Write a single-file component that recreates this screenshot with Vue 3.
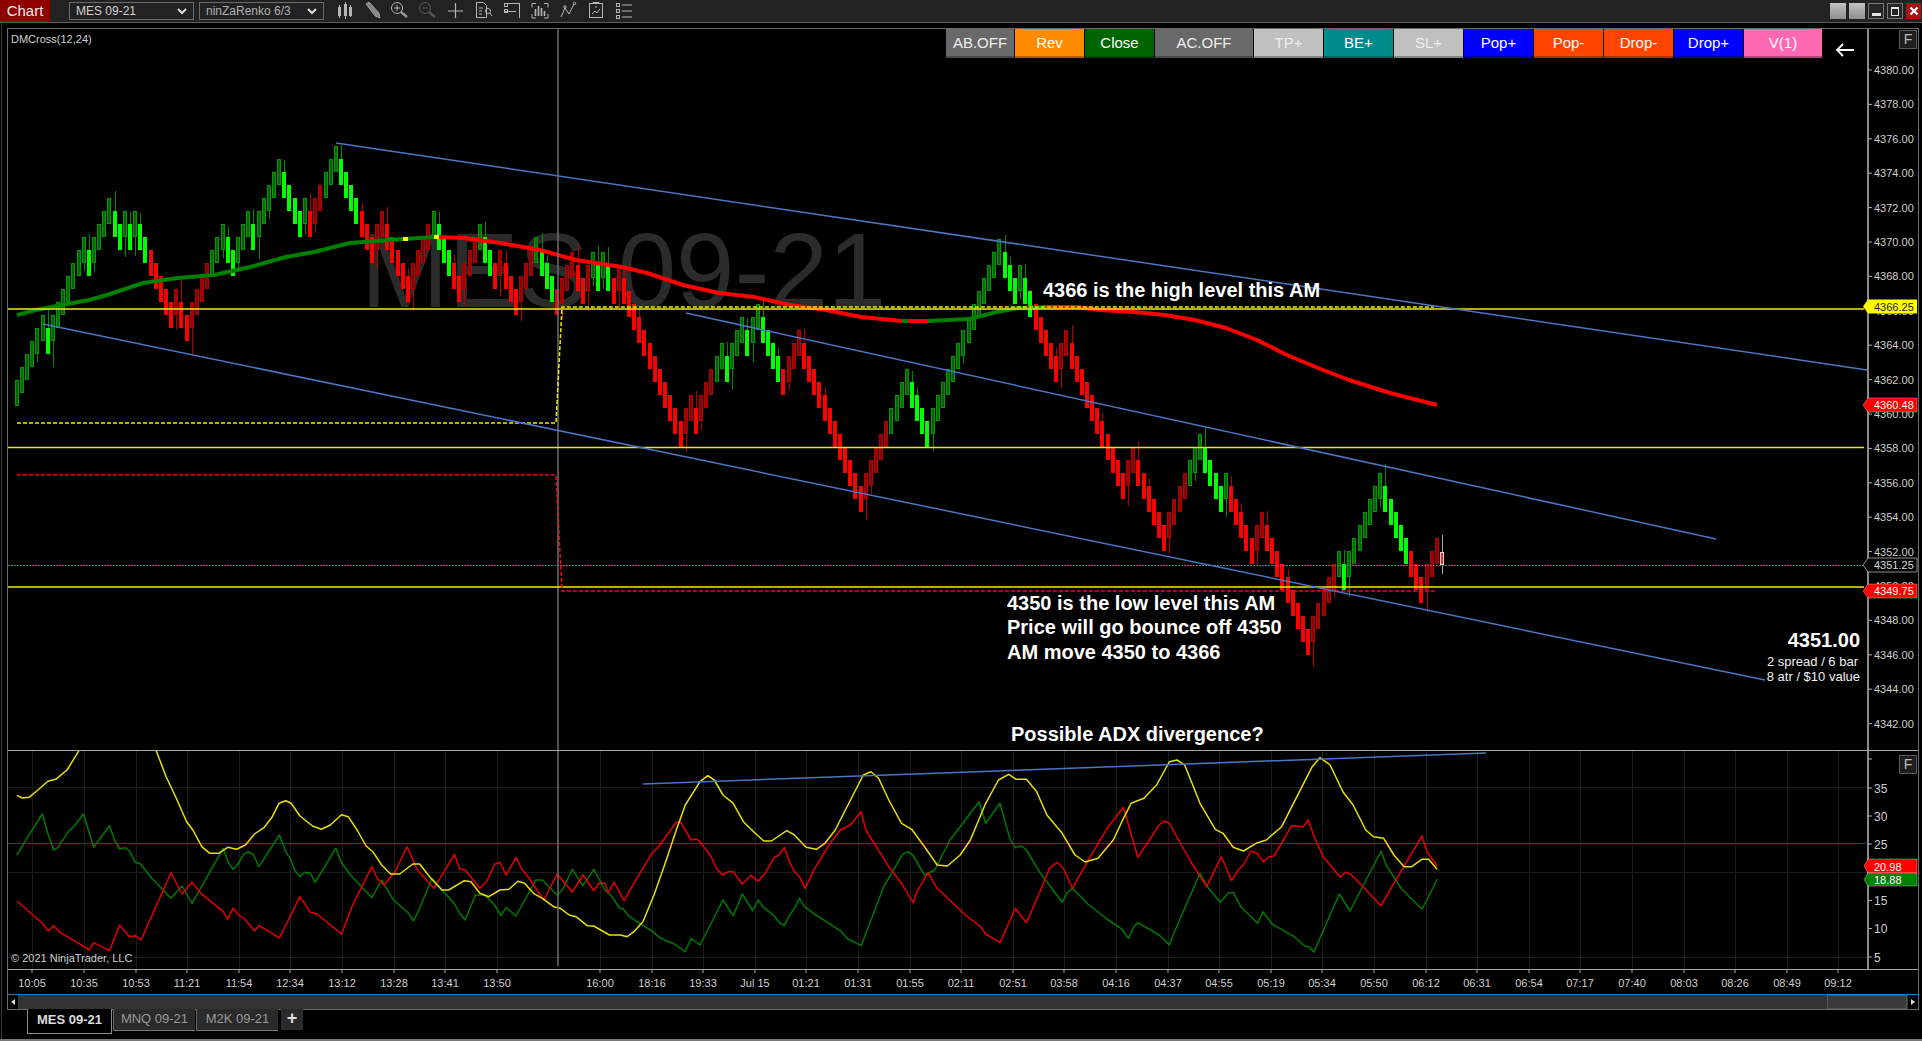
<script setup>
// all chart coordinates below are page pixels, the svg viewBoxes are offset to match
const BAR_STEP = 5.145
const BRICK = 13

const moves = 'U5 D1 U7 D1 U4 D2 U1 D1 U1 D1 D6 U1 D2 U7 D2 U3 D1 U5 D4 U1 D1 U5 D7 U2 D5 U5 D5 U4 D3 U1 D3 U4 D4 ' +
  'U3 D2 U2 D1 U1 D2 U1 D2 D10 U2 D1 U5 D1 U3 D1 U2 D5 U3 D12 U9 D4 U14 D3 U1 D7 U2 D6 ' +
  'D5 U2 D6 U7 D4 U1 D5 U2 D9 U6 D1 U7 D8 U3'

const greenRanges = [[0, 25], [38, 56], [60, 66], [81, 84], [90, 92], [101, 104], [112, 115], [136, 148], [170, 197], [228, 235], [257, 270]]

// the long wicks at the swing lows and highs
const wickOverride = { 7: 26, 19: 20, 34: 26, 165: 21, 178: 17, 196: 14, 252: 25, 259: 20, 224: 16, 266: 22, 274: 22 }

function isGreen(i) {
  return greenRanges.some(([a, b]) => i >= a && i <= b)
}

function buildBars() {
  const list = []
  let y = 393
  let prev = 'U'
  let i = 0
  const push = (dir) => {
    const up = dir === 'U'
    const green = isGreen(i)
    const turned = dir !== prev
    const len = wickOverride[i] || (turned ? 8 + ((i * 7) % 15) : (i % 9 === 4 ? 8 : 0))
    list.push({
      x: Math.round(16.8 + i * BAR_STEP) - 2,
      y: Math.round(y - 13),
      cls: (green ? 'g' : 'r') + (up ? ' rise' : ' fall'),
      wick: len
        ? up
          ? { y1: Math.round(y + 13), y2: Math.round(y + 13 + len) }
          : { y1: Math.round(y - 13 - len), y2: Math.round(y - 13) }
        : null,
    })
    prev = dir
    i++
  }
  push('U')
  moves.split(' ').forEach((m) => {
    const dir = m[0]
    const n = Number(m.slice(1))
    for (let k = 0; k < n; k++) {
      y += dir === 'U' ? -BRICK : BRICK
      if (i === 106) y += 2
      push(dir)
    }
  })
  return list
}

const bars = buildBars()
const lastBarX = Math.round(16.8 + bars.length * BAR_STEP) - 2

const toPoints = (pts) => pts.map(([x, y]) => `${x},${y}`).join(' ')

const maGreenA = [[17, 315], [36, 310], [57, 306], [89, 300], [107, 295], [143, 283], [178, 278], [214, 275], [250, 267], [286, 257], [314, 252], [350, 243], [403, 239], [436, 237]]
const maRedA = [[436, 237], [464, 238], [500, 243], [540, 250], [576, 260], [622, 267], [647, 273], [683, 285], [719, 293], [754, 297], [790, 305], [826, 310], [861, 317], [902, 321]]
const maGreenB = [[902, 321], [908, 321]]
const maRedB = [[908, 321], [928, 321]]
const maGreenC = [[928, 321], [969, 319], [997, 312], [1018, 308], [1045, 307]]
const maRedC = [[1045, 307], [1076, 307], [1100, 310], [1135, 312], [1165, 315], [1195, 320], [1226, 328], [1257, 340], [1287, 355], [1318, 368], [1349, 380], [1390, 393], [1437, 405]]

// indicator lines, read from two crops of the reference
const fromLeft = (pts) => pts.map(([x, y]) => [+(x / 2.24).toFixed(1), +(740 + y / 3).toFixed(1)])
const fromRight = (pts) => pts.map(([x, y]) => [+(700 + x / 1.96).toFixed(1), +(740 + y / 3).toFixed(1)])

const adx = [...fromLeft([[38, 166], [50, 174], [65, 172], [85, 150], [107, 124], [125, 118], [150, 90], [177, 32], [260, -120], [350, 32], [372, 110], [395, 175], [418, 245], [432, 270], [452, 320], [470, 340], [490, 340], [510, 322], [530, 328], [550, 315], [570, 282], [592, 262], [610, 230], [625, 190], [640, 182], [652, 190], [672, 228], [700, 258], [720, 268], [740, 255], [765, 224], [780, 230], [800, 270], [820, 318], [835, 335], [855, 375], [875, 402], [895, 402], [925, 372], [940, 372], [965, 415], [990, 450], [1005, 450], [1040, 422], [1055, 425], [1075, 460], [1095, 470], [1120, 450], [1140, 448], [1160, 424], [1175, 430], [1195, 460], [1215, 475], [1240, 500], [1255, 505], [1275, 525], [1290, 530], [1315, 557], [1330, 558], [1365, 585], [1390, 585], [1405, 590], [1420, 575], [1440, 545], [1465, 465], [1490, 370], [1515, 270], [1535, 195], [1568, 125]]),
  ...fromRight([[15, 107], [28, 120], [45, 165], [65, 190], [85, 245], [105, 275], [125, 303], [140, 303], [170, 272], [185, 285], [208, 322], [228, 328], [245, 310], [265, 270], [295, 180], [320, 105], [335, 95], [350, 115], [370, 180], [395, 250], [415, 268], [440, 320], [465, 375], [485, 378], [510, 345], [530, 300], [560, 190], [585, 120], [605, 103], [620, 118], [640, 118], [660, 155], [680, 225], [710, 280], [735, 345], [755, 366], [780, 355], [810, 300], [830, 235], [845, 190], [870, 175], [895, 135], [920, 65], [935, 60], [950, 75], [980, 190], [1010, 268], [1025, 280], [1045, 322], [1065, 333], [1090, 310], [1110, 300], [1140, 260], [1170, 170], [1200, 80], [1215, 53], [1235, 75], [1260, 155], [1280, 195], [1305, 270], [1320, 290], [1340, 295], [1360, 345], [1380, 380], [1395, 380], [1415, 358], [1428, 358], [1445, 388]])]

const diMinus = [...fromLeft([[38, 483], [65, 515], [95, 550], [108, 572], [120, 557], [135, 578], [170, 605], [200, 630], [210, 608], [245, 632], [268, 555], [290, 590], [303, 587], [316, 600], [383, 398], [408, 462], [430, 427], [450, 460], [500, 515], [510, 538], [522, 505], [535, 525], [548, 537], [570, 572], [580, 557], [610, 580], [626, 594], [672, 470], [695, 517], [710, 522], [765, 582], [790, 495], [833, 380], [845, 415], [860, 435], [885, 395], [912, 320], [935, 390], [972, 445], [1018, 343], [1030, 387], [1042, 390], [1075, 445], [1090, 425], [1108, 373], [1120, 367], [1134, 405], [1156, 352], [1170, 390], [1180, 405], [1218, 480], [1248, 402], [1282, 456], [1306, 405], [1330, 452], [1342, 430], [1355, 430], [1362, 458], [1376, 427], [1398, 482], [1420, 430], [1460, 340], [1475, 320], [1515, 247], [1525, 247], [1548, 300], [1560, 297], [1568, 305]]),
  ...fromRight([[22, 350], [32, 385], [44, 405], [55, 395], [65, 395], [83, 432], [100, 406], [114, 424], [130, 395], [145, 353], [155, 345], [165, 322], [175, 365], [185, 395], [195, 410], [206, 445], [225, 385], [255, 310], [275, 270], [295, 255], [316, 215], [325, 270], [370, 380], [395, 430], [418, 488], [425, 455], [447, 398], [465, 445], [520, 525], [550, 560], [560, 582], [588, 608], [618, 505], [640, 548], [665, 460], [685, 385], [700, 367], [712, 385], [730, 445], [765, 350], [800, 260], [830, 202], [858, 352], [900, 255], [910, 243], [920, 250], [960, 360], [993, 440], [1022, 350], [1042, 422], [1055, 390], [1065, 375], [1080, 333], [1092, 340], [1104, 365], [1115, 350], [1125, 348], [1160, 257], [1182, 260], [1192, 240], [1205, 295], [1222, 352], [1255, 412], [1265, 397], [1275, 402], [1335, 497], [1360, 430], [1415, 288], [1425, 335], [1445, 378]])]

const diPlus = [...fromLeft([[38, 345], [60, 295], [95, 222], [107, 280], [120, 330], [130, 322], [155, 272], [165, 260], [187, 222], [210, 322], [245, 257], [258, 305], [268, 327], [280, 323], [290, 333], [303, 367], [315, 372], [340, 415], [383, 475], [408, 438], [430, 490], [500, 325], [512, 370], [522, 388], [532, 375], [545, 345], [556, 335], [568, 345], [580, 380], [626, 285], [640, 335], [650, 355], [660, 390], [672, 410], [683, 397], [695, 400], [706, 427], [752, 325], [765, 368], [785, 405], [833, 473], [855, 420], [880, 478], [915, 520], [926, 543], [940, 505], [968, 415], [990, 450], [1018, 492], [1030, 520], [1042, 540], [1065, 465], [1085, 465], [1108, 495], [1122, 527], [1134, 503], [1156, 528], [1200, 420], [1215, 420], [1248, 465], [1260, 450], [1282, 388], [1306, 437], [1330, 388], [1355, 450], [1370, 468], [1388, 505], [1396, 507], [1410, 530], [1462, 575], [1480, 595], [1510, 612], [1535, 635], [1548, 595], [1568, 615]]),
  ...fromRight([[45, 480], [65, 527], [83, 462], [103, 512], [114, 480], [125, 503], [145, 527], [155, 547], [165, 557], [175, 527], [185, 505], [195, 475], [205, 500], [225, 523], [275, 572], [290, 597], [316, 617], [360, 440], [397, 343], [407, 335], [417, 345], [440, 405], [460, 390], [490, 300], [510, 260], [547, 185], [560, 250], [588, 190], [607, 295], [618, 323], [630, 318], [640, 330], [665, 395], [710, 487], [720, 458], [730, 445], [760, 492], [800, 540], [825, 565], [840, 595], [850, 560], [858, 548], [900, 585], [920, 615], [930, 575], [980, 400], [995, 442], [1020, 487], [1035, 460], [1045, 457], [1060, 500], [1093, 550], [1103, 515], [1122, 553], [1165, 590], [1185, 618], [1195, 622], [1203, 637], [1253, 462], [1274, 513], [1335, 333], [1345, 375], [1375, 447], [1415, 507], [1425, 480], [1445, 417]])]

const priceTicks = []
for (let p = 4380; p >= 4342; p -= 2) {
  priceTicks.push({ label: p.toFixed(2), y: +(70 + (4380 - p) * 17.2).toFixed(1) })
}

const indicatorTicks = [
  { label: '', y: 759 },
  { label: '35', y: 788 },
  { label: '30', y: 816 },
  { label: '25', y: 844 },
  { label: '15', y: 900.5 },
  { label: '10', y: 928.5 },
  { label: '5', y: 957 },
]

const timeLabels = ['10:05', '10:35', '10:53', '11:21', '11:54', '12:34', '13:12', '13:28', '13:41', '13:50', '', '16:00', '18:16', '19:33', 'Jul 15', '01:21', '01:31', '01:55', '02:11', '02:51', '03:58', '04:16', '04:37', '04:55', '05:19', '05:34', '05:50', '06:12', '06:31', '06:54', '07:17', '07:40', '08:03', '08:26', '08:49', '09:12']
const timeTicks = timeLabels
  .map((label, k) => ({ label, x: Math.round(32.3 + k * 51.6) }))
  .filter((t) => t.label)

const flags = [
  { label: '4366.25', top: 299.5, cls: 'flag-yellow' },
  { label: '4360.48', top: 398, cls: 'flag-red' },
  { label: '4351.25', top: 558, cls: 'flag-dark' },
  { label: '4349.75', top: 584, cls: 'flag-red' },
]

const flagShape = (top, h = 14) =>
  `1863,${top + h / 2} 1868,${top} 1917,${top} 1917,${top + h} 1868,${top + h}`

const buttons = [
  { label: 'AB.OFF', w: 68, cls: 'btn-grey' },
  { label: 'Rev', w: 69, cls: 'btn-orange' },
  { label: 'Close', w: 69, cls: 'btn-green' },
  { label: 'AC.OFF', w: 98, cls: 'btn-grey' },
  { label: 'TP+', w: 69, cls: 'btn-silver' },
  { label: 'BE+', w: 69, cls: 'btn-teal' },
  { label: 'SL+', w: 69, cls: 'btn-silver' },
  { label: 'Pop+', w: 69, cls: 'btn-blue' },
  { label: 'Pop-', w: 69, cls: 'btn-red' },
  { label: 'Drop-', w: 69, cls: 'btn-red' },
  { label: 'Drop+', w: 69, cls: 'btn-blue' },
  { label: 'V(1)', w: 78, cls: 'btn-pink' },
]
</script>

<template>
  <div class="app">
    <header class="titlebar">
      <div class="chart-tab">Chart</div>
      <div class="picker picker-first">
        <span>MES 09-21</span>
        <svg width="10" height="7" viewBox="0 0 10 7"><path d="M1 1l4 4 4-4" fill="none" stroke="#ddd" stroke-width="2" /></svg>
      </div>
      <div class="picker picker-second">
        <span>ninZaRenko 6/3</span>
        <svg width="10" height="7" viewBox="0 0 10 7"><path d="M1 1l4 4 4-4" fill="none" stroke="#ddd" stroke-width="2" /></svg>
      </div>

      <svg class="tools" width="306" height="22" viewBox="338 0 306 22">
        <g fill="#b5b5b5" stroke="#b5b5b5">
          <!-- candles -->
          <g stroke-width="1">
            <rect x="338.5" y="7.5" width="2" height="8" /><path d="M339.5 5v13" />
            <rect x="344.5" y="4.5" width="2" height="11" /><path d="M345.5 2v17" />
            <rect x="349.5" y="7.5" width="2" height="8" /><path d="M350.5 5v12" />
          </g>
          <!-- pencil -->
          <path d="M366 4l3-2 10 11 1 5-5-2z" fill="#888" stroke="#aaa" stroke-width="0.8" />
          <!-- zoom in -->
          <g fill="none" stroke-width="1">
            <circle cx="397" cy="8" r="5.5" /><path d="M394 8h6M397 5v6" />
            <path d="M401 12l6 5" stroke-width="2.4" stroke="#999" />
          </g>
          <!-- zoom out, disabled -->
          <g fill="none" stroke="#555" stroke-width="1">
            <circle cx="425" cy="8" r="5.5" /><path d="M422 8h6" />
            <path d="M429 12l6 5" stroke-width="2.4" />
          </g>
          <!-- crosshair -->
          <path d="M448 11h15M455.500 3v15" fill="none" stroke-width="1.2" />
          <!-- report -->
          <g fill="none" stroke-width="1">
            <path d="M476.500 2.500h7l3 3v12h-10z" />
            <path d="M479 8h4M479 11h3M479 14h3" />
            <circle cx="488" cy="11" r="2.500" /><path d="M490 13l2 3" />
          </g>
          <!-- bar with rows -->
          <g fill="none" stroke-width="1">
            <path d="M504 3.500h16M519.500 3v15M504 11.500h12" />
            <rect x="504.500" y="3.500" width="3" height="3" /><rect x="504.500" y="9.500" width="3" height="3" />
          </g>
          <!-- framed bars -->
          <g fill="none" stroke-width="1">
            <path d="M536 3.500h-4v4M544 3.500h4v4M532 14v4h4M548 14v4h-4" />
            <path d="M535.500 9v7M538.500 6v10M541.500 8v8M544.500 11v5" stroke-width="1.6" />
          </g>
          <!-- line with nodes -->
          <g fill="none" stroke-width="1">
            <path d="M561 17l4-9 4 6 5-10" />
            <circle cx="565" cy="7" r="1.2" /><circle cx="574.500" cy="3.500" r="1.2" />
          </g>
          <!-- clipboard -->
          <g fill="none" stroke-width="1">
            <rect x="589.500" y="3.500" width="13" height="14" />
            <path d="M593 3.500v-1h6v1M592 14l3-3 2 2 3-4M595 7h2" />
          </g>
          <!-- list -->
          <g fill="none" stroke-width="1">
            <rect x="616.500" y="3.500" width="3" height="3" /><rect x="616.500" y="9.500" width="3" height="3" /><rect x="616.500" y="15.500" width="3" height="3" />
            <path d="M622 5h10M622 11h10M622 17h10" stroke-width="1.2" />
          </g>
        </g>
      </svg>

      <div class="window-buttons">
        <span class="win win-light"></span>
        <span class="win win-light"></span>
        <span class="win win-dark"><i class="win-min"></i></span>
        <span class="win win-dark"><i class="win-max"></i></span>
        <span class="win win-close">
          <svg width="10" height="10" viewBox="0 0 10 10"><path d="M1.500 1.500l7 7M8.500 1.500l-7 7" stroke="#fff" stroke-width="2.200" /></svg>
        </span>
      </div>
    </header>

    <main class="workspace">
      <section class="chart">
        <div class="pane price-pane">
          <svg class="plot" width="1910" height="721" viewBox="8 29 1910 721">
            <text class="watermark" x="361" y="307">MES 09-21</text>

            <g shape-rendering="crispEdges">
              <template v-for="(b, i) in bars" :key="i">
                <line
                  v-if="b.wick"
                  :class="['wick', b.cls]"
                  :x1="b.x + 2"
                  :x2="b.x + 2"
                  :y1="b.wick.y1"
                  :y2="b.wick.y2"
                />
                <rect :class="['body', b.cls]" :x="b.x + 0.5" :y="b.y + 0.5" width="3" height="25" />
              </template>
              <!-- live bar -->
              <line class="live-wick" :x1="lastBarX + 2" :x2="lastBarX + 2" y1="535" y2="574" />
              <rect class="live-body" :x="lastBarX + 0.5" y="552.5" width="3" height="12" />
            </g>

            <polyline class="ma ma-green" :points="toPoints(maGreenA)" />
            <polyline class="ma ma-red" :points="toPoints(maRedA)" />
            <polyline class="ma ma-green" :points="toPoints(maGreenB)" />
            <polyline class="ma ma-red" :points="toPoints(maRedB)" />
            <polyline class="ma ma-green" :points="toPoints(maGreenC)" />
            <polyline class="ma ma-red" :points="toPoints(maRedC)" />
            <rect x="403" y="237" width="5" height="4" fill="#ffff00" />
            <rect x="434" y="235" width="5" height="4" fill="#ffff00" />

            <line class="crosshair" x1="558" x2="558" y1="29" y2="750" />

            <line class="level" x1="8" x2="1864" y1="309" y2="309" />
            <line class="level" x1="8" x2="1864" y1="447.500" y2="447.500" />
            <line class="level" x1="8" x2="1864" y1="587" y2="587" />
            <line class="last-price" x1="8" x2="1864" y1="565.500" y2="565.500" />

            <polyline class="dash dash-yellow" points="17,423 556,423 562,307 1434,307" />
            <polyline class="dash dash-red" points="17,475 556,475 562,591 1437,591" />

            <line class="channel" x1="336" y1="143" x2="1867" y2="370" />
            <line class="channel" x1="43" y1="324" x2="1765" y2="680" />
            <line class="channel" x1="686" y1="313" x2="1716" y2="539" />

            <text class="note" x="1043" y="297">4366 is the high level this AM</text>
            <text class="note" x="1007" y="610">4350 is the low level this AM</text>
            <text class="note" x="1007" y="634">Price will go bounce off 4350</text>
            <text class="note" x="1007" y="659">AM move 4350 to 4366</text>
            <text class="note" x="1011" y="741">Possible ADX divergence?</text>

            <text class="quote" x="1860" y="647">4351.00</text>
            <text class="quote-sub" x="1858" y="666">2 spread / 6 bar</text>
            <text class="quote-sub" x="1860" y="681">8 atr / $10 value</text>

            <text class="small" x="11" y="43">DMCross(12,24)</text>

            <line class="axis-line" x1="1868" x2="1868" y1="29" y2="750" />
            <template v-for="t in priceTicks" :key="t.label">
              <line class="axis-tick" x1="1868" x2="1872" :y1="t.y" :y2="t.y" />
              <text class="small" x="1874" :y="t.y + 4">{{ t.label }}</text>
            </template>

            <template v-for="f in flags" :key="f.label">
              <polygon :class="f.cls" :points="flagShape(f.top)" />
              <text :class="['small', f.cls + '-text']" x="1874" :y="f.top + 11">{{ f.label }}</text>
            </template>
          </svg>

          <div class="order-buttons">
            <button v-for="b in buttons" :key="b.label" :class="['order', b.cls]" :style="{ width: b.w + 'px' }">
              {{ b.label }}
            </button>
            <svg class="back-arrow" width="20" height="14" viewBox="0 0 20 14">
              <path d="M19 7H2M8 1L2 7l6 6" fill="none" stroke="#fff" stroke-width="1.800" />
            </svg>
          </div>
          <div class="f-button f-price">F</div>
        </div>

        <div class="pane indicator-pane">
          <svg class="plot" width="1910" height="218" viewBox="8 751 1910 218">
            <g shape-rendering="crispEdges">
              <line v-for="t in timeTicks" :key="t.x" class="grid" :x1="t.x" :x2="t.x" y1="751" y2="969" />
              <line class="grid" x1="8" x2="1868" y1="787" y2="787" />
              <line class="grid" x1="8" x2="1868" y1="872" y2="872" />
              <line class="grid" x1="8" x2="1868" y1="957" y2="957" />
              <line class="adx-level" x1="8" x2="1866" y1="843.500" y2="843.500" />
            </g>

            <polyline class="di" stroke="#007a00" :points="toPoints(diPlus)" />
            <polyline class="di" stroke="#e60000" :points="toPoints(diMinus)" />
            <polyline class="di" stroke="#e8e000" :points="toPoints(adx)" />

            <line class="channel" x1="643" y1="784" x2="1486" y2="753" />
            <line class="crosshair" x1="558" x2="558" y1="751" y2="966" />

            <text class="small" x="11" y="962">© 2021 NinjaTrader, LLC</text>

            <line class="axis-line" x1="1868" x2="1868" y1="751" y2="969" />
            <template v-for="t in indicatorTicks" :key="t.y">
              <line class="axis-tick" x1="1868" x2="1872" :y1="t.y" :y2="t.y" />
              <text class="small axis-num" x="1874" :y="t.y + 4.500">{{ t.label }}</text>
            </template>

            <polygon class="flag-red" points="1864,866 1868,859 1917,859 1917,873 1868,873" />
            <text class="small flag-red-text" x="1874" y="871">20.98</text>
            <polygon class="flag-green" points="1864,879.500 1868,873 1917,873 1917,886 1868,886" />
            <text class="small flag-red-text" x="1874" y="884">18.88</text>
          </svg>
          <div class="f-button f-indicator">F</div>
        </div>

        <div class="time-axis">
          <svg width="1910" height="24" viewBox="8 970 1910 24">
            <template v-for="t in timeTicks" :key="t.x">
              <line class="axis-tick" :x1="t.x" :x2="t.x" y1="970" y2="973" />
              <text class="small time-label" :x="t.x" y="987">{{ t.label }}</text>
            </template>
          </svg>
        </div>

        <div class="scrollbar">
          <span class="scroll-btn"><i class="tri-left"></i></span>
          <div class="scroll-track"><span class="scroll-thumb"></span></div>
          <span class="scroll-btn"><i class="tri-right"></i></span>
        </div>
      </section>

      <nav class="tabs">
        <span class="tab tab-active">MES 09-21</span>
        <span class="tab">MNQ 09-21</span>
        <span class="tab">M2K 09-21</span>
        <span class="tab-add">+</span>
      </nav>
    </main>
  </div>
</template>

<style>
html,
body {
  margin: 0;
  background: #000;
}
</style>

<style scoped>
.app {
  width: 1922px;
  height: 1041px;
  display: flex;
  flex-direction: column;
  overflow: hidden;
  background: #000;
  font-family: "Liberation Sans", Arial, sans-serif;
  box-sizing: border-box;
  border-bottom: 2px solid #777;
}

.titlebar {
  height: 22px;
  flex: none;
  display: flex;
  align-items: center;
  background: #222;
  border-bottom: 1px solid #5a5a5a;
}

.chart-tab {
  width: 50px;
  height: 22px;
  flex: none;
  background: #8f0000;
  color: #eee;
  font-size: 15px;
  line-height: 22px;
  text-align: center;
}

.picker {
  height: 18px;
  box-sizing: border-box;
  border: 1px solid #6a6a6a;
  display: flex;
  align-items: center;
  justify-content: space-between;
  padding: 0 6px;
  font-size: 12px;
  color: #d0d0d0;
}

.picker-first {
  width: 125px;
  margin-left: 19px;
}

.picker-second {
  width: 125px;
  margin-left: 5px;
  color: #b0b0b0;
}

.tools {
  margin-left: 14px;
  flex: none;
}

.window-buttons {
  margin-left: auto;
  display: flex;
  gap: 3px;
  padding-right: 1px;
}

.win {
  width: 16px;
  height: 16px;
  box-sizing: border-box;
  display: flex;
  align-items: center;
  justify-content: center;
}

.win-light {
  background: linear-gradient(#c2c2c2, #8f8f8f);
}

.win-dark {
  background: #262626;
  border: 1px solid #777;
}

.win-close {
  width: 15px;
  background: #a81414;
}

.win-min {
  width: 9px;
  height: 3px;
  margin-top: 6px;
  background: #e6e6e6;
}

.win-max {
  width: 8px;
  height: 9px;
  box-sizing: border-box;
  border: 1px solid #e6e6e6;
  border-top-width: 2px;
}

.workspace {
  flex: 1;
  padding: 5px 4px 0 5px;
  display: flex;
  flex-direction: column;
  border-left: 1px solid #3a3a3a;
  margin-left: 1px;
}

.chart {
  flex: none;
  width: 1910px;
  border: 1px solid #6a6a6a;
  border-bottom-width: 1px;
}

.pane {
  position: relative;
}

.price-pane {
  height: 721px;
  border-bottom: 1px solid #a8a8a8;
}

.indicator-pane {
  height: 218px;
  border-bottom: 1px solid #a8a8a8;
}

.plot {
  display: block;
  overflow: hidden;
}

.watermark {
  font-size: 105px;
  fill: #2b2b2b;
}

.body.g.rise {
  fill: #006400;
  stroke: #009a00;
}

.body.g.fall {
  fill: #00ff00;
  stroke: #00ff00;
}

.body.r.rise {
  fill: #8b0000;
  stroke: #b80000;
}

.body.r.fall {
  fill: #ff0000;
  stroke: #ff0000;
}

.body {
  stroke-width: 1;
}

.wick.g {
  stroke: #008a00;
}

.wick.r {
  stroke: #b00000;
}

.live-wick {
  stroke: #a8a8a8;
}

.live-body {
  fill: #ff2020;
  stroke: #d8d8d8;
}

.ma {
  fill: none;
  stroke-width: 4;
  stroke-linejoin: round;
}

.ma-green {
  stroke: #008000;
}

.ma-red {
  stroke: #ff0000;
}

.crosshair {
  stroke: #6e6e6e;
  stroke-width: 1.500;
}

.level {
  stroke: #ecec00;
  stroke-width: 1.500;
}

.last-price {
  stroke: #1f8f8f;
  stroke-width: 1;
  stroke-dasharray: 2 1;
}

.dash {
  fill: none;
  stroke-width: 1.500;
  stroke-dasharray: 4 2;
}

.dash-yellow {
  stroke: #ecec00;
}

.dash-red {
  stroke: #e81010;
}

.channel {
  stroke: #4e74c4;
  stroke-width: 1.500;
}

.note {
  font-size: 20px;
  font-weight: 700;
  fill: #fff;
}

.quote {
  font-size: 20px;
  font-weight: 700;
  fill: #fff;
  text-anchor: end;
}

.quote-sub {
  font-size: 13px;
  fill: #f0f0f0;
  text-anchor: end;
}

.small {
  font-size: 11px;
  fill: #cfcfcf;
}

.axis-num {
  font-size: 12px;
}

.axis-line {
  stroke: #8a8a8a;
  stroke-width: 2;
}

.axis-tick {
  stroke: #b0b0b0;
  stroke-width: 1;
}

.flag-yellow {
  fill: #ffff00;
}

.flag-yellow-text {
  fill: #222;
}

.flag-red {
  fill: #ff0000;
  stroke: #ffffff55;
}

.flag-red-text {
  fill: #fff;
}

.flag-dark {
  fill: #060606;
  stroke: #8a8a8a;
}

.flag-dark-text {
  fill: #d8d8d8;
}

.flag-green {
  fill: #008000;
  stroke: #ffffff55;
}

.order-buttons {
  position: absolute;
  top: 0;
  left: 938px;
  display: flex;
  gap: 1px;
}

.order {
  height: 29px;
  box-sizing: border-box;
  padding: 0;
  border: 0;
  border-bottom: 2px solid rgba(0, 0, 0, 0.3);
  font: 15px "Liberation Sans", Arial, sans-serif;
  color: #fff;
}

.btn-grey {
  background: #696969;
  color: #eee;
}

.btn-orange {
  background: #ff8c00;
}

.btn-green {
  background: #006400;
}

.btn-silver {
  background: #c0c0c0;
  color: #eee;
}

.btn-teal {
  background: #008b8b;
}

.btn-blue {
  background: #0000ff;
}

.btn-red {
  background: #ff4500;
}

.btn-pink {
  background: #ff69b4;
}

.back-arrow {
  margin: 14px 0 0 12px;
}

.f-button {
  position: absolute;
  right: 1px;
  width: 18px;
  height: 19px;
  box-sizing: border-box;
  background: #1e1e1e;
  border: 1px solid #5a5a5a;
  color: #bbb;
  font-size: 14px;
  line-height: 17px;
  text-align: center;
}

.f-price {
  top: 1px;
}

.f-indicator {
  top: 4px;
}

.grid {
  stroke: #1b1b1b;
  stroke-width: 1;
}

.adx-level {
  stroke: #0d4f4f;
  stroke-width: 1;
}

.di {
  fill: none;
  stroke-width: 1.500;
  stroke-linejoin: round;
}

.time-axis {
  height: 24px;
  border-bottom: 1px solid #2a7aa8;
}

.time-axis svg {
  display: block;
}

.time-label {
  text-anchor: middle;
}

.scrollbar {
  height: 14px;
  display: flex;
}

.scroll-btn {
  width: 10px;
  background: #000;
  display: flex;
  align-items: center;
  justify-content: center;
}

.tri-left,
.tri-right {
  width: 0;
  height: 0;
  border-top: 3px solid transparent;
  border-bottom: 3px solid transparent;
}

.tri-left {
  border-right: 4px solid #ddd;
}

.tri-right {
  border-left: 4px solid #ddd;
}

.scroll-track {
  flex: 1;
  background: #333;
  display: flex;
  justify-content: flex-end;
}

.scroll-thumb {
  width: 80px;
  box-sizing: border-box;
  background: #3a3a3a;
  border: 1px solid #555;
  margin-right: 1px;
}

.tabs {
  display: flex;
  align-items: flex-start;
  padding-left: 20px;
  margin-top: -1px;
}

.tab {
  width: 82px;
  height: 22px;
  margin-right: 1px;
  box-sizing: border-box;
  background: #2a2a2a;
  border-bottom: 1px solid #777;
  border-left: 1px solid #666;
  color: #999;
  font-size: 13px;
  line-height: 20px;
  text-align: center;
}

.tab-active {
  width: 85px;
  height: 25px;
  background: #000;
  border: 1px solid #8a8a8a;
  border-top: 0;
  color: #ddd;
  font-weight: 700;
  line-height: 22px;
}

.tab-add {
  width: 22px;
  height: 21px;
  margin-left: 2px;
  background: #2a2a2a;
  color: #ddd;
  font-size: 18px;
  font-weight: 700;
  line-height: 19px;
  text-align: center;
}
</style>
